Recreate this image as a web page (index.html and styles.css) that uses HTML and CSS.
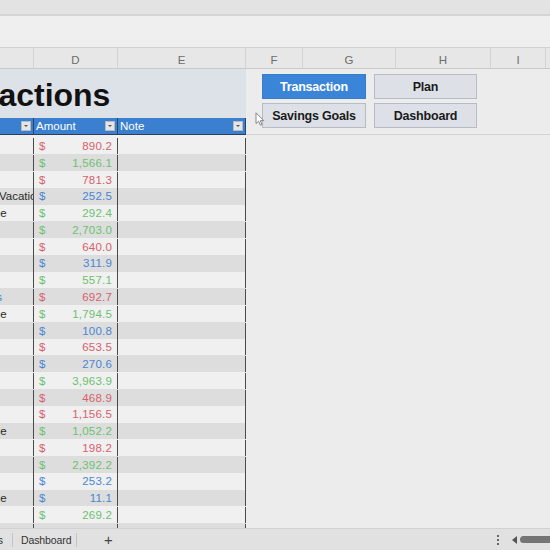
FILE: index.html
```html
<!DOCTYPE html>
<html>
<head>
<meta charset="utf-8">
<link rel="stylesheet" href="styles.css">
</head>
<body>
<div class="app">
  <div class="topbar"></div>
  <div class="formula"></div>
  <div class="colheads">
    <div class="ch w34"></div>
    <div class="ch w84">D</div>
    <div class="ch w128">E</div>
    <div class="ch w57">F</div>
    <div class="ch w93">G</div>
    <div class="ch w95">H</div>
    <div class="ch w55">I</div>
    <div class="ch rest"></div>
  </div>
  <div class="sheet">
    <div class="table">
      <div class="title"><span class="title-text">Transactions</span></div>
      <div class="thead">
        <div class="th"><span class="th-label"></span><span class="filter"></span></div>
        <div class="th"><span class="th-label">Amount</span><span class="filter"></span></div>
        <div class="th"><span class="th-label">Note</span><span class="filter"></span></div>
      </div>
      <div class="tbody">
        <div class="row first"><div class="c"></div><div class="amt red"><span>$</span><span>890.2</span></div><div class="n"></div></div>
        <div class="row"><div class="c"></div><div class="amt green"><span>$</span><span>1,566.1</span></div><div class="n"></div></div>
        <div class="row"><div class="c"></div><div class="amt red"><span>$</span><span>781.3</span></div><div class="n"></div></div>
        <div class="row"><div class="c"><span class="clip">Vacatio</span></div><div class="amt blue"><span>$</span><span>252.5</span></div><div class="n"></div></div>
        <div class="row"><div class="c"><span class="tail">Income</span></div><div class="amt green"><span>$</span><span>292.4</span></div><div class="n"></div></div>
        <div class="row"><div class="c"></div><div class="amt green"><span>$</span><span>2,703.0</span></div><div class="n"></div></div>
        <div class="row"><div class="c"></div><div class="amt red"><span>$</span><span>640.0</span></div><div class="n"></div></div>
        <div class="row"><div class="c"></div><div class="amt blue"><span>$</span><span>311.9</span></div><div class="n"></div></div>
        <div class="row"><div class="c"></div><div class="amt green"><span>$</span><span>557.1</span></div><div class="n"></div></div>
        <div class="row"><div class="c"><span class="tail-blue">Savings</span></div><div class="amt red"><span>$</span><span>692.7</span></div><div class="n"></div></div>
        <div class="row"><div class="c"><span class="tail">Income</span></div><div class="amt green"><span>$</span><span>1,794.5</span></div><div class="n"></div></div>
        <div class="row"><div class="c"></div><div class="amt blue"><span>$</span><span>100.8</span></div><div class="n"></div></div>
        <div class="row"><div class="c"></div><div class="amt red"><span>$</span><span>653.5</span></div><div class="n"></div></div>
        <div class="row"><div class="c"></div><div class="amt blue"><span>$</span><span>270.6</span></div><div class="n"></div></div>
        <div class="row"><div class="c"></div><div class="amt green"><span>$</span><span>3,963.9</span></div><div class="n"></div></div>
        <div class="row"><div class="c"></div><div class="amt red"><span>$</span><span>468.9</span></div><div class="n"></div></div>
        <div class="row"><div class="c"></div><div class="amt red"><span>$</span><span>1,156.5</span></div><div class="n"></div></div>
        <div class="row"><div class="c"><span class="tail">Income</span></div><div class="amt green"><span>$</span><span>1,052.2</span></div><div class="n"></div></div>
        <div class="row"><div class="c"></div><div class="amt red"><span>$</span><span>198.2</span></div><div class="n"></div></div>
        <div class="row"><div class="c"></div><div class="amt green"><span>$</span><span>2,392.2</span></div><div class="n"></div></div>
        <div class="row"><div class="c"></div><div class="amt blue"><span>$</span><span>253.2</span></div><div class="n"></div></div>
        <div class="row"><div class="c"><span class="tail">Income</span></div><div class="amt blue"><span>$</span><span>11.1</span></div><div class="n"></div></div>
        <div class="row"><div class="c"></div><div class="amt green"><span>$</span><span>269.2</span></div><div class="n"></div></div>
        <div class="row"><div class="c"></div><div class="amt orange"><span>$</span><span>1,063.3</span></div><div class="n"></div></div>
        <div class="row"><div class="c"></div><div class="amt red"><span>$</span><span>412.0</span></div><div class="n"></div></div>
      </div>
    </div>
    <div class="side">
      <div class="side-top">
        <div class="buttons">
          <div class="btn primary">Transaction</div>
          <div class="btn">Plan</div>
          <div class="btn">Savings Goals</div>
          <div class="btn">Dashboard</div>
        </div>
      </div>
    </div>
    <svg class="cursor" width="10" height="14" viewBox="0 0 10 14"><path d="M1 0.8 L1 11.5 L3.6 9.2 L5.4 13.2 L7 12.5 L5.3 8.6 L8.8 8.6 Z" fill="#ffffff" stroke="#7a7a7a" stroke-width="0.9" stroke-linejoin="round"/></svg>
  </div>
  <div class="tabs">
    <div class="tab-clip"><span>Goals</span></div>
    <div class="sep"></div>
    <div class="tab">Dashboard</div>
    <div class="sep"></div>
    <div class="plus">+</div>
    <div class="spacer"></div>
    <div class="dots"><i></i><i></i><i></i></div>
    <div class="arrow"></div>
    <div class="thumb"></div>
  </div>
</div>
</body>
</html>
```
FILE: styles.css
```css
* { box-sizing: border-box; }
html, body { margin: 0; padding: 0; }
body {
  width: 550px;
  height: 550px;
  overflow: hidden;
  font-family: "Liberation Sans", Arial, sans-serif;
  background: #ececec;
}
.app {
  width: 550px;
  height: 550px;
  display: flex;
  flex-direction: column;
  overflow: hidden;
}
.topbar {
  height: 16px;
  flex: none;
  background: #e3e3e3;
  border-bottom: 2px solid #d5d5d5;
}
.formula {
  height: 32px;
  flex: none;
  background: #efefef;
  border-bottom: 1px solid #d2d2d2;
}
.colheads {
  height: 21px;
  flex: none;
  display: flex;
  background: #e7e7e7;
  border-bottom: 1px solid #c9c9c9;
}
.ch {
  flex: none;
  border-right: 1px solid #d3d3d3;
  color: #6d6d6d;
  font-size: 11.5px;
  text-align: center;
  line-height: 20px;
  padding-top: 2px;
}
.w34 { width: 34px; }
.w84 { width: 84px; }
.w128 { width: 128px; }
.w57 { width: 57px; }
.w93 { width: 93px; }
.w95 { width: 95px; }
.w55 { width: 55px; }
.ch.rest { flex: 1; border-right: none; }

.sheet {
  flex: 1;
  min-height: 0;
  display: flex;
  position: relative;
  overflow: hidden;
}
.table {
  width: 246px;
  flex: none;
  display: flex;
  flex-direction: column;
}
.title {
  height: 49px;
  flex: none;
  background: #dde1e8;
  overflow: hidden;
  white-space: nowrap;
  padding-top: 4px;
  line-height: 45px;
}
.title-text {
  display: inline-block;
  margin-left: -87px;
  font-size: 32px;
  font-weight: bold;
  color: #111;
}
.thead {
  height: 17px;
  flex: none;
  display: grid;
  grid-template-columns: 34px 84px 128px;
  background: #3b7fd0;
  border-bottom: 1px solid #2a3f5a;
}
.th {
  display: flex;
  align-items: center;
  justify-content: space-between;
  border-right: 1px solid #2b4464;
  padding: 0 2px 0 2px;
  color: #ffffff;
  font-size: 11.5px;
}
.filter {
  width: 10px;
  height: 10px;
  background: #e6e6e6;
  border: 1px solid #b9b9b9;
  position: relative;
}
.filter::after {
  content: "";
  position: absolute;
  left: 2px;
  top: 3px;
  border-left: 2px solid transparent;
  border-right: 2px solid transparent;
  border-top: 2px solid #555;
}
.tbody { flex: none; display: flex; flex-direction: column; }
.row {
  height: 16.77px;
  flex: none;
  display: grid;
  grid-template-columns: 34px 84px 128px;
  background: #f0f0f0;
  font-size: 11px;
  line-height: 16.77px;
  padding-top: 0.6px;
}
.row.first {
  height: 19.3px;
  padding-top: 3px;
}
.row:nth-child(even) { background: #dddddd; }
.row > div {
  border-right: 1px solid #4a4a4a;
  overflow: hidden;
  white-space: nowrap;
}
.c { color: #2a2a2a; font-size: 11.5px; }
.clip { margin-left: -1px; }
.tail { display: inline-block; margin-left: -31px; }
.tail-blue { display: inline-block; margin-left: -39px; color: #3b7fd0; }
.amt {
  display: flex;
  justify-content: space-between;
  padding: 0 5px 0 5px;
  letter-spacing: 0.2px;
  font-size: 11.5px;
}
.red { color: #d75f6c; }
.green { color: #6cc16f; }
.blue { color: #4a86d2; }
.orange { color: #e3955a; }

.side {
  flex: 1;
  display: flex;
  flex-direction: column;
}
.side-top {
  height: 66px;
  flex: none;
  border-bottom: 1px solid #d3d3d3;
  padding: 5px 0 0 16px;
}
.buttons {
  display: grid;
  grid-template-columns: 104px 103px;
  grid-auto-rows: 25px;
  column-gap: 8px;
  row-gap: 4px;
}
.btn {
  background: #dde1e7;
  border: 1px solid #b7bcc4;
  color: #1a1a1a;
  font-weight: bold;
  font-size: 12.5px;
  letter-spacing: -0.2px;
  display: flex;
  align-items: center;
  justify-content: center;
}
.btn.primary {
  background: #3a85d7;
  border-color: #3a7cc8;
  color: #ffffff;
}
.cursor {
  position: absolute;
  left: 255px;
  top: 43px;
}

.tabs {
  height: 22px;
  flex: none;
  background: #e1e1e1;
  border-top: 1px solid #d0d0d0;
  display: flex;
  align-items: center;
  font-size: 10.5px;
  color: #333;
}
.tab-clip {
  width: 12px;
  flex: none;
  overflow: hidden;
  display: flex;
  justify-content: flex-end;
  padding-right: 9px;
  white-space: nowrap;
}
.tab-clip span { flex: none; }
.sep {
  width: 1px;
  height: 14px;
  background: #c3c3c3;
  flex: none;
}
.tab {
  padding: 0 8px 0 8px;
  width: 63px;
  flex: none;
  letter-spacing: -0.1px;
}
.plus {
  margin-left: 27px;
  font-size: 15px;
  color: #444;
  line-height: 15px;
}
.spacer { flex: 1; }
.dots {
  display: flex;
  flex-direction: column;
  gap: 2px;
  margin-right: 13px;
}
.dots i {
  display: block;
  width: 2px;
  height: 2px;
  background: #666;
}
.arrow {
  width: 0;
  height: 0;
  border-top: 4px solid transparent;
  border-bottom: 4px solid transparent;
  border-right: 5px solid #555;
  margin-right: 3px;
}
.thumb {
  width: 34px;
  height: 7px;
  background: #747474;
  border-radius: 4px 0 0 4px;
  margin-right: -4px;
}
```
